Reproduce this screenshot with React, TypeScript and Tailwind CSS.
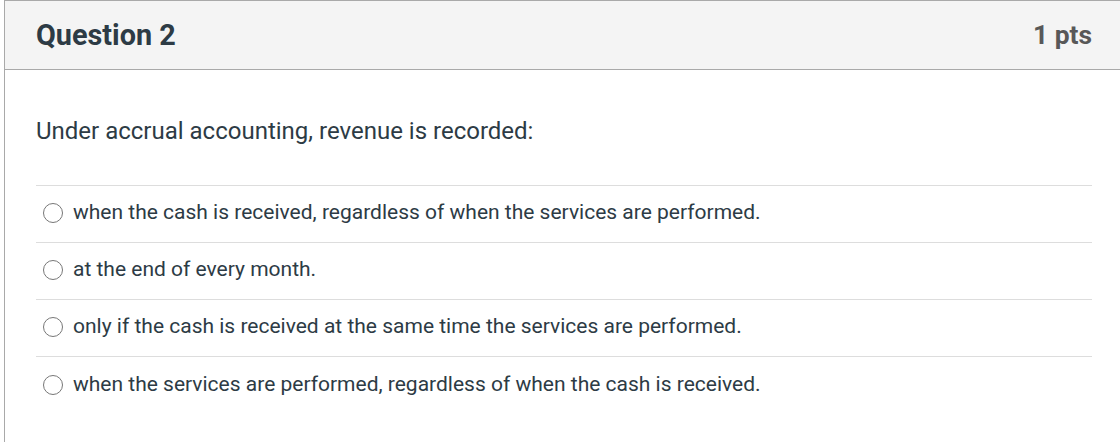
import React from "react";

const options = [
  "when the cash is received, regardless of when the services are performed.",
  "at the end of every month.",
  "only if the cash is received at the same time the services are performed.",
  "when the services are performed, regardless of when the cash is received.",
];

export default function App() {
  return (
    <div className="w-[1120px] h-[442px] bg-white pl-[4px] overflow-hidden" style={{ fontFamily: "Roboto, 'Liberation Sans', sans-serif" }}>
      <div className="border-l border-t border-[#a9a9a9] h-full">
        <div className="h-[69px] bg-[#f4f4f4] border-b border-[#a9a9a9] flex items-center justify-between pl-[31px] pr-[28px]">
          <h2 className="text-[28.8px] font-bold text-[#2d3b45] leading-none">Question 2</h2>
          <div className="text-[26.4px] font-bold text-[#585858] leading-none">1 pts</div>
        </div>
        <div className="pl-[31px] pr-[28px] pt-[47px]">
          <p className="text-[24px] text-[#2d3b45] leading-[28px] mb-[40px]">Under accrual accounting, revenue is recorded:</p>
          <div className="border-t border-[#dddddd]">
            {options.map((o, i) => (
              <div key={i} className={"h-[57px] flex items-center pl-[7px] " + (i < options.length - 1 ? "border-b border-[#dddddd]" : "")}>
                <span className="w-[20px] h-[20px] rounded-full border-[1.5px] border-[#777] bg-white mr-[10px] shrink-0 -mt-[2px]" />
                <span className="text-[21px] text-[#2d3b45] leading-[24px] -mt-[4px]">{o}</span>
              </div>
            ))}
          </div>
        </div>
      </div>
    </div>
  );
}
